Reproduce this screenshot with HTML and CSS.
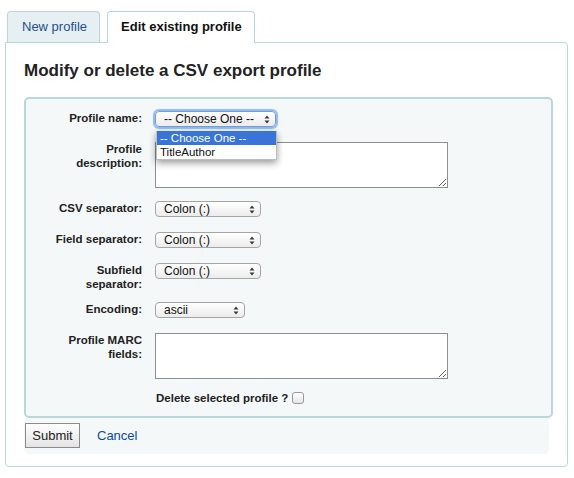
FILE: index.html
```html
<!DOCTYPE html>
<html lang="en">
<head>
<meta charset="utf-8">
<title>CSV export profiles</title>
<link rel="stylesheet" href="styles.css">
</head>
<body>
<div class="page">
  <ul class="tabs">
    <li class="tab">New profile</li>
    <li class="tab active">Edit existing profile</li>
  </ul>
  <div class="panel">
    <h3 class="title">Modify or delete a CSV export profile</h3>
    <div class="fs">
      <div class="row">
        <label class="lbl">Profile name:</label>
        <div class="ctl">
          <span class="select focus w-name">-- Choose One --<svg class="arr" width="6" height="9" viewBox="0 0 6 9"><path d="M0.5 3.5 L3 0.5 L5.5 3.5Z M0.5 5.5 L3 8.5 L5.5 5.5Z"/></svg></span>
          <ul class="dropdown">
            <li class="opt sel">-- Choose One --</li>
            <li class="opt">TitleAuthor</li>
          </ul>
        </div>
      </div>
      <div class="row row-ta">
        <label class="lbl">Profile description:</label>
        <div class="ctl"><textarea class="ta"></textarea></div>
      </div>
      <div class="row">
        <label class="lbl">CSV separator:</label>
        <div class="ctl"><span class="select w-sep">Colon (:)<svg class="arr" width="6" height="9" viewBox="0 0 6 9"><path d="M0.5 3.5 L3 0.5 L5.5 3.5Z M0.5 5.5 L3 8.5 L5.5 5.5Z"/></svg></span></div>
      </div>
      <div class="row">
        <label class="lbl">Field separator:</label>
        <div class="ctl"><span class="select w-sep">Colon (:)<svg class="arr" width="6" height="9" viewBox="0 0 6 9"><path d="M0.5 3.5 L3 0.5 L5.5 3.5Z M0.5 5.5 L3 8.5 L5.5 5.5Z"/></svg></span></div>
      </div>
      <div class="row row-2l">
        <label class="lbl">Subfield separator:</label>
        <div class="ctl"><span class="select w-sep">Colon (:)<svg class="arr" width="6" height="9" viewBox="0 0 6 9"><path d="M0.5 3.5 L3 0.5 L5.5 3.5Z M0.5 5.5 L3 8.5 L5.5 5.5Z"/></svg></span></div>
      </div>
      <div class="row">
        <label class="lbl">Encoding:</label>
        <div class="ctl"><span class="select w-enc">ascii<svg class="arr" width="6" height="9" viewBox="0 0 6 9"><path d="M0.5 3.5 L3 0.5 L5.5 3.5Z M0.5 5.5 L3 8.5 L5.5 5.5Z"/></svg></span></div>
      </div>
      <div class="row row-ta2">
        <label class="lbl">Profile MARC fields:</label>
        <div class="ctl"><textarea class="ta"></textarea></div>
      </div>
      <div class="row row-last">
        <label class="del">Delete selected profile ?<span class="chk"></span></label>
      </div>
    </div>
    <div class="action">
      <button class="btn" type="button">Submit</button>
      <a class="cancel" href="#">Cancel</a>
    </div>
  </div>
</div>
</body>
</html>
```
FILE: styles.css
```css
* { box-sizing: border-box; }
body {
  margin: 0;
  font-family: "Liberation Sans", Arial, sans-serif;
  color: #222;
  background: #fff;
}
.page {
  padding: 11px 0 0 5px;
  width: 574px;
}
.tabs {
  display: flex;
  align-items: flex-start;
  gap: 7px;
  list-style: none;
  margin: 0 0 -1px 2px;
  padding: 0;
  position: relative;
  z-index: 1;
}
.tab {
  height: 31px;
  border: 1px solid #b9d8d9;
  border-bottom: none;
  border-radius: 4px 4px 0 0;
  background: #e6f0f2;
  color: #1f4f8f;
  font-size: 13px;
  line-height: 15px;
  padding: 7px 12px 0 14px;
}
.tab.active {
  height: 32px;
  background: #fff;
  color: #111;
  font-weight: bold;
  padding: 7px 12px 0 13px;
}
.panel {
  width: 563px;
  border: 1px solid #b9d8d9;
  border-radius: 0 4px 4px 4px;
  padding: 18px 13px 12px 18px;
}
.title {
  margin: 0 0 16px;
  font-size: 17px;
  line-height: 20px;
  font-weight: bold;
  color: #222;
}
.fs {
  width: 529px;
  border: 2px solid #b9d8d9;
  border-radius: 5px;
  background: #f4f8f9;
  padding: 12px 0 11px 20px;
}
.row {
  display: flex;
  align-items: flex-start;
  margin-bottom: 15px;
}
.row-ta { margin-bottom: 13px; }
.row-2l { margin-bottom: 11px; }
.row-ta2 { margin-bottom: 12px; }
.row-last { margin-bottom: 0; padding-left: 109px; }
.lbl {
  flex: none;
  width: 96px;
  margin-right: 13px;
  text-align: right;
  font-weight: bold;
  font-size: 11.5px;
  line-height: 14px;
  color: #222;
}
.ctl { position: relative; }
.select {
  display: flex;
  align-items: center;
  justify-content: space-between;
  height: 16px;
  border: 1px solid #a5a5a5;
  border-radius: 4px;
  background: linear-gradient(#ffffff, #ececec);
  font-size: 12px;
  line-height: 14px;
  padding: 0 5px 0 8px;
  color: #111;
}
.select.focus {
  border-color: #6f9fdc;
  box-shadow: 0 0 1px 2px #93b9ec;
}
.w-name { width: 121px; }
.w-sep { width: 106px; }
.w-enc { width: 90px; }
.arr { fill: #3a3a3a; flex: none; }
.dropdown {
  position: absolute;
  left: 1px;
  top: 20px;
  width: 121px;
  margin: 0;
  padding: 0;
  list-style: none;
  background: #fff;
  border: 1px solid #bdbdbd;
  border-top: none;
  box-shadow: 0 3px 7px rgba(0, 0, 0, 0.4);
  font-size: 11.5px;
  z-index: 2;
}
.opt {
  height: 14px;
  line-height: 14px;
  padding-left: 3px;
  color: #111;
}
.opt.sel {
  background: #3875d7;
  color: #fff;
}
.ta {
  display: block;
  width: 293px;
  height: 46px;
  margin: 0;
  border: 1px solid #8e8e8e;
  background: #fff;
  font-family: inherit;
}
.del {
  display: flex;
  align-items: center;
  font-weight: bold;
  font-size: 11.5px;
  line-height: 14px;
  padding-left: 1px;
  color: #222;
}
.chk {
  width: 12px;
  height: 12px;
  margin-left: 4px;
  border: 1px solid #9a9a9a;
  border-radius: 3px;
  background: linear-gradient(#ffffff, #e6e6e6);
}
.action {
  display: flex;
  align-items: center;
  width: 525px;
  background: #f4f8f9;
  border-radius: 0 0 5px 5px;
  padding: 5px 1px 6px;
}
.btn {
  width: 55px;
  height: 25px;
  padding: 0;
  border: 1px solid #8a8a8a;
  background: linear-gradient(#ffffff, #e3e3e3);
  font-family: inherit;
  font-size: 13px;
  color: #222;
}
.cancel {
  margin-left: 17px;
  font-size: 13px;
  color: #0b4a9e;
  text-decoration: none;
}
```
